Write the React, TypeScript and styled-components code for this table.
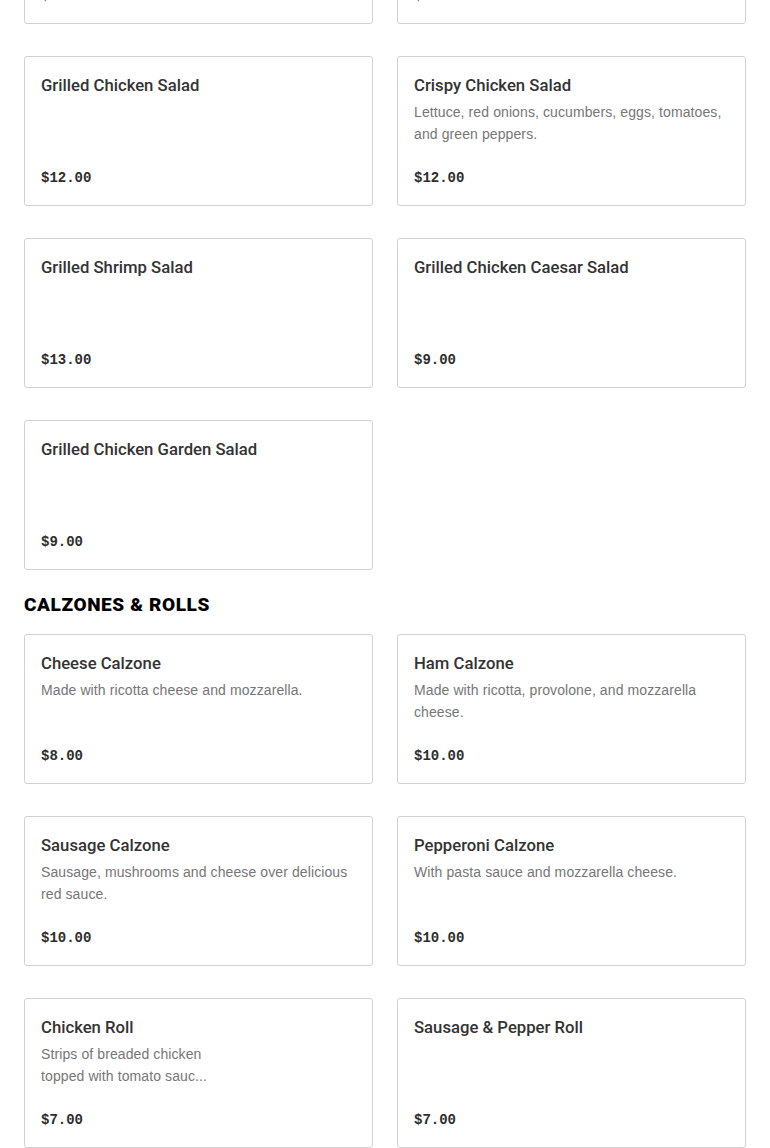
import styled, { createGlobalStyle } from 'styled-components'

const GlobalStyle = createGlobalStyle`
  body {
    margin: 0;
    background: #fff;
    font-family: "Liberation Sans", Arial, sans-serif;
    color: #2d2d2d;
  }
`

const Page = styled.main`
  padding: 0 24px;
  margin-top: -126px;
`

const Section = styled.section`
  margin-bottom: 23px;
`

const SectionTitle = styled.h2`
  margin: 0 0 17px;
  font-family: Roboto, "Liberation Sans", Arial, sans-serif;
  font-weight: 900;
  font-size: 19px;
  line-height: 24px;
  letter-spacing: 0.6px;
  color: #000;
  text-transform: uppercase;
`

const Grid = styled.div`
  display: grid;
  grid-template-columns: repeat(2, 1fr);
  column-gap: 24px;
  row-gap: 32px;
`

const Card = styled.div`
  display: flex;
  flex-direction: column;
  box-sizing: border-box;
  height: 150px;
  padding: 16px;
  border: 1px solid #d2d2d2;
  border-radius: 3px;
  background: #fff;
`

const Name = styled.div`
  font-family: Roboto, "Liberation Sans", Arial, sans-serif;
  font-size: 16.7px;
  font-weight: 500;
  line-height: 25px;
  margin-bottom: -1px;
  color: #333;
`

const Description = styled.p`
  margin: 4px 0 0;
  font-size: 14px;
  line-height: 22px;
  letter-spacing: 0.1px;
  color: #767676;
  white-space: pre-line;
`

const Price = styled.div`
  margin-top: auto;
  font-family: "Liberation Mono", "DejaVu Sans Mono", monospace;
  font-weight: 700;
  font-size: 14px;
  line-height: 22px;
  color: #2d2d2d;
`

type Item = { name: string; description?: string; price: string }

const salads: Item[] = [
  { name: 'Chef Salad', price: '$11.00' },
  { name: 'Antipasto Salad', price: '$11.00' },
  { name: 'Grilled Chicken Salad', price: '$12.00' },
  {
    name: 'Crispy Chicken Salad',
    description: 'Lettuce, red onions, cucumbers, eggs, tomatoes, and green peppers.',
    price: '$12.00',
  },
  { name: 'Grilled Shrimp Salad', price: '$13.00' },
  { name: 'Grilled Chicken Caesar Salad', price: '$9.00' },
  { name: 'Grilled Chicken Garden Salad', price: '$9.00' },
]

const calzones: Item[] = [
  { name: 'Cheese Calzone', description: 'Made with ricotta cheese and mozzarella.', price: '$8.00' },
  { name: 'Ham Calzone', description: 'Made with ricotta, provolone, and mozzarella cheese.', price: '$10.00' },
  { name: 'Sausage Calzone', description: 'Sausage, mushrooms and cheese over delicious red sauce.', price: '$10.00' },
  { name: 'Pepperoni Calzone', description: 'With pasta sauce and mozzarella cheese.', price: '$10.00' },
  { name: 'Chicken Roll', description: 'Strips of breaded chicken\ntopped with tomato sauc...', price: '$7.00' },
  { name: 'Sausage & Pepper Roll', price: '$7.00' },
]

const MenuGrid = ({ items }: { items: Item[] }) => (
  <Grid>
    {items.map((item, index) => (
      <Card key={index}>
        <Name>{item.name}</Name>
        {item.description && <Description>{item.description}</Description>}
        <Price>{item.price}</Price>
      </Card>
    ))}
  </Grid>
)

export default function App() {
  return (
    <>
      <GlobalStyle />
      <Page>
        <Section>
          <MenuGrid items={salads} />
        </Section>
        <Section>
          <SectionTitle>Calzones &amp; Rolls</SectionTitle>
          <MenuGrid items={calzones} />
        </Section>
      </Page>
    </>
  )
}
